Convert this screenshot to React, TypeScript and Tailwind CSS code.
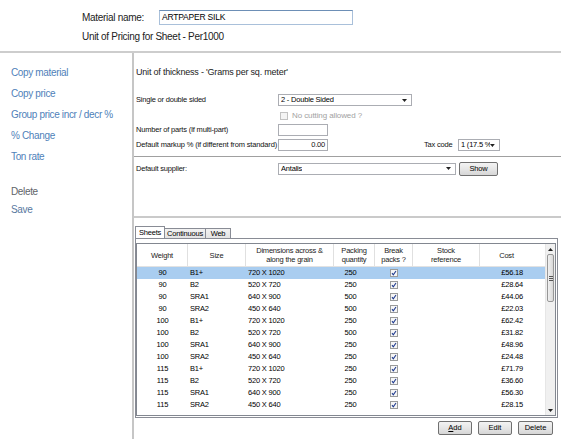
import React from 'react';

const FONT = { fontFamily: '"Liberation Sans", Arial, sans-serif' };

const rows = [
  ['90', 'B1+', '720 X 1020', '250', '£56.18'],
  ['90', 'B2', '520 X 720', '250', '£28.64'],
  ['90', 'SRA1', '640 X 900', '500', '£44.06'],
  ['90', 'SRA2', '450 X 640', '500', '£22.03'],
  ['100', 'B1+', '720 X 1020', '250', '£62.42'],
  ['100', 'B2', '520 X 720', '500', '£31.82'],
  ['100', 'SRA1', '640 X 900', '250', '£48.96'],
  ['100', 'SRA2', '450 X 640', '250', '£24.48'],
  ['115', 'B1+', '720 X 1020', '250', '£71.79'],
  ['115', 'B2', '520 X 720', '250', '£36.60'],
  ['115', 'SRA1', '640 X 900', '250', '£56.30'],
  ['115', 'SRA2', '450 X 640', '250', '£28.15'],
];

function Arrow({ up = false }: { up?: boolean }) {
  return (
    <svg width="5" height="3" viewBox="0 0 5 3">
      <path d={up ? 'M0 3 L2.5 0 L5 3 Z' : 'M0 0 L5 0 L2.5 3 Z'} fill="#222" />
    </svg>
  );
}

function Combo({ value, width }: { value: string; width: string }) {
  return (
    <div className={`${width} h-[12px] bg-white border border-[#abadb3] flex items-center justify-between pl-[2px] pr-[4px] text-[7.5px] tracking-[-0.2px] text-black`}>
      <span className="leading-none whitespace-nowrap overflow-hidden">{value}</span>
      <Arrow />
    </div>
  );
}

function Check({ disabled = false }: { disabled?: boolean }) {
  return (
    <svg width="8" height="8" viewBox="0 0 8 8" className="shrink-0">
      <rect x="0.5" y="0.5" width="7" height="7" fill={disabled ? '#f4f4f4' : '#f6f6f6'} stroke={disabled ? '#c2c2c2' : '#9a9b9b'} />
      {!disabled && <path d="M2 4.2 L3.3 5.8 L6 2" fill="none" stroke="#1f3b8f" strokeWidth="1.1" />}
    </svg>
  );
}

function WinButton({ label, width }: { label: React.ReactNode; width: string }) {
  return (
    <div className={`${width} h-[14px] rounded-[2px] border border-[#707070] bg-gradient-to-b from-[#f3f3f3] via-[#e6e6e6] to-[#d6d6d6] flex items-center justify-center text-[7.5px] text-black leading-none`}>
      {label}
    </div>
  );
}

export default function App() {
  return (
    <div className="w-[561px] h-[439px] bg-white overflow-hidden text-black flex flex-col" style={FONT}>
      {/* Header */}
      <div className="h-[51px] pl-[82px] pt-[10px] shrink-0">
        <div className="flex items-center h-[15px]">
          <span className="w-[77px] text-[10px] tracking-[-0.3px] text-[#222]">Material name:</span>
          <div className="w-[194px] h-[15px] border border-[#a9c0da] border-t-[#6d8fb6] flex items-center pl-[2px] text-[8.5px] tracking-[-0.2px]">
            ARTPAPER SILK
          </div>
        </div>
        <div className="mt-[6px] text-[10px] leading-[12px] tracking-[-0.3px] text-[#222]">Unit of Pricing for Sheet - Per1000</div>
      </div>
      <div className="h-[2px] bg-[#cdcdcd] shrink-0" />

      <div className="flex flex-1 min-h-0">
        {/* Left nav */}
        <div className="w-[134px] shrink-0 border-r-2 border-[#c6c6c6] pl-[11px] pt-[14px] text-[10px] leading-[12px] tracking-[-0.35px]">
          <div className="text-[#4f7fb9]">Copy material</div>
          <div className="mt-[9px] text-[#4f7fb9]">Copy price</div>
          <div className="mt-[9px] text-[#4f7fb9]">Group price incr / decr %</div>
          <div className="mt-[9px] text-[#4f7fb9]">% Change</div>
          <div className="mt-[9px] text-[#4f7fb9]">Ton rate</div>
          <div className="mt-[23px] text-[#606468]">Delete</div>
          <div className="mt-[6px] text-[#5878a0]">Save</div>
        </div>

        {/* Right panel */}
        <div className="flex-1 flex flex-col min-w-0">
          <div className="pl-[2px] pt-[14px] text-[9px] leading-[11px] tracking-[-0.2px] text-[#222]">
            Unit of thickness - 'Grams per sq. meter'
          </div>

          <div className="pl-[2px] text-[7.5px] tracking-[-0.2px] text-[#111]">
            <div className="mt-[16px] flex items-center h-[12px]">
              <span className="w-[142px]">Single or double sided</span>
              <Combo value="2 - Double Sided" width="w-[134px]" />
            </div>
            <div className="mt-[5px] flex items-center h-[10px] pl-[144px] gap-[4px]">
              <Check disabled />
              <span className="text-[8px] tracking-[-0.1px] text-[#a2a2a2]">No cutting allowed ?</span>
            </div>
            <div className="mt-[3px] flex items-center h-[12px]">
              <span className="w-[142px]">Number of parts (If multi-part)</span>
              <div className="w-[50px] h-[12px] bg-white border border-[#abadb3]" />
            </div>
            <div className="mt-[3px] flex items-center h-[12px]">
              <span className="w-[142px] whitespace-nowrap tracking-[-0.15px]">Default markup % (if different from standard) :</span>
              <div className="w-[50px] h-[12px] bg-white border border-[#abadb3] flex items-center justify-end pr-[2px]">0.00</div>
              <span className="ml-[96px] w-[34px]">Tax code</span>
              <Combo value="1 (17.5 %" width="w-[42px]" />
            </div>
          </div>

          <div className="mt-[5px] h-px bg-[#a0a0a0]" />

          <div className="pl-[2px] mt-[5px] flex items-center h-[13px] text-[7.5px] tracking-[-0.2px] text-[#111]">
            <span className="w-[142px]">Default supplier:</span>
            <Combo value="Antalis" width="w-[178px]" />
            <div className="ml-[3px]">
              <WinButton label="Show" width="w-[39px]" />
            </div>
          </div>

          <div className="mt-[41px] h-[2px] bg-[#cacaca]" />

          {/* Tabs */}
          <div className="mt-[8px] ml-[1px] flex items-end h-[12px] text-[7.5px] tracking-[-0.2px] leading-none">
            <div className="w-[30px] h-[12px] bg-white border border-b-0 border-[#898c95] flex items-center justify-center">Sheets</div>
            <div className="w-[41px] h-[10px] bg-gradient-to-b from-[#f2f2f2] to-[#e3e3e3] border border-l-0 border-b-0 border-[#898c95] flex items-center justify-center">Continuous</div>
            <div className="w-[25px] h-[10px] bg-gradient-to-b from-[#f2f2f2] to-[#e3e3e3] border border-l-0 border-b-0 border-[#898c95] flex items-center justify-center">Web</div>
          </div>

          <div className="ml-[1px] w-[423px] border border-[#898c95] pt-[4px] pb-px">
            <div className="w-[420px] h-[173px] border border-[#828790] flex text-[7.5px] tracking-[-0.2px] leading-none">
              <div className="w-[408px] flex flex-col">
                {/* Header */}
                <div className="h-[23px] shrink-0 grid grid-cols-[51px_58px_88px_41px_38px_67px_65px] border-b border-[#e2e2e2] text-[#222] leading-[9px]">
                  <div className="border-r border-[#e0e0e0] flex items-center justify-center">Weight</div>
                  <div className="border-r border-[#e0e0e0] flex items-center justify-center">Size</div>
                  <div className="border-r border-[#e0e0e0] flex items-center justify-center text-center">Dimensions across &amp;<br />along the grain</div>
                  <div className="border-r border-[#e0e0e0] flex items-center justify-center text-center">Packing<br />quantity</div>
                  <div className="border-r border-[#e0e0e0] flex items-center justify-center text-center">Break<br />packs ?</div>
                  <div className="border-r border-[#e0e0e0] flex items-center justify-center text-center">Stock<br />reference</div>
                  <div className="flex items-center justify-center pr-[12px]">Cost</div>
                </div>
                {rows.map((r, i) => (
                  <div
                    key={i}
                    className={`h-[12px] shrink-0 grid grid-cols-[51px_58px_88px_41px_38px_67px_65px] items-center ${i === 0 ? 'bg-[#a9cdf0]' : ''}`}
                  >
                    <div className="text-center">{r[0]}</div>
                    <div className="pl-[2px]">{r[1]}</div>
                    <div className="pl-[2px]">{r[2]}</div>
                    <div className="text-center pr-[8px]">{r[3]}</div>
                    <div className="flex justify-center"><Check /></div>
                    <div />
                    <div className="text-right pr-[22px]">{r[4]}</div>
                  </div>
                ))}
              </div>
              {/* Scrollbar */}
              <div className="w-[10px] bg-[#f0f0f0] border-l border-[#e6e6e6] flex flex-col">
                <div className="h-[10px] flex items-center justify-center"><Arrow up /></div>
                <div className="flex-1 px-px">
                  <div className="h-[48px] rounded-[2px] border border-[#979797] bg-gradient-to-r from-[#f1f1f1] to-[#d8d8d8] flex flex-col items-center justify-center gap-px">
                    <div className="w-[4px] h-px bg-[#555]" />
                    <div className="w-[4px] h-px bg-[#555]" />
                    <div className="w-[4px] h-px bg-[#555]" />
                  </div>
                </div>
                <div className="h-[10px] flex items-center justify-center"><Arrow /></div>
              </div>
            </div>
          </div>

          {/* Buttons */}
          <div className="mt-[3px] flex justify-end gap-[6px] pr-[8px]">
            <WinButton label={<span><span className="underline">A</span>dd</span>} width="w-[34px]" />
            <WinButton label="Edit" width="w-[34px]" />
            <WinButton label="Delete" width="w-[35px]" />
          </div>
        </div>
      </div>
    </div>
  );
}
